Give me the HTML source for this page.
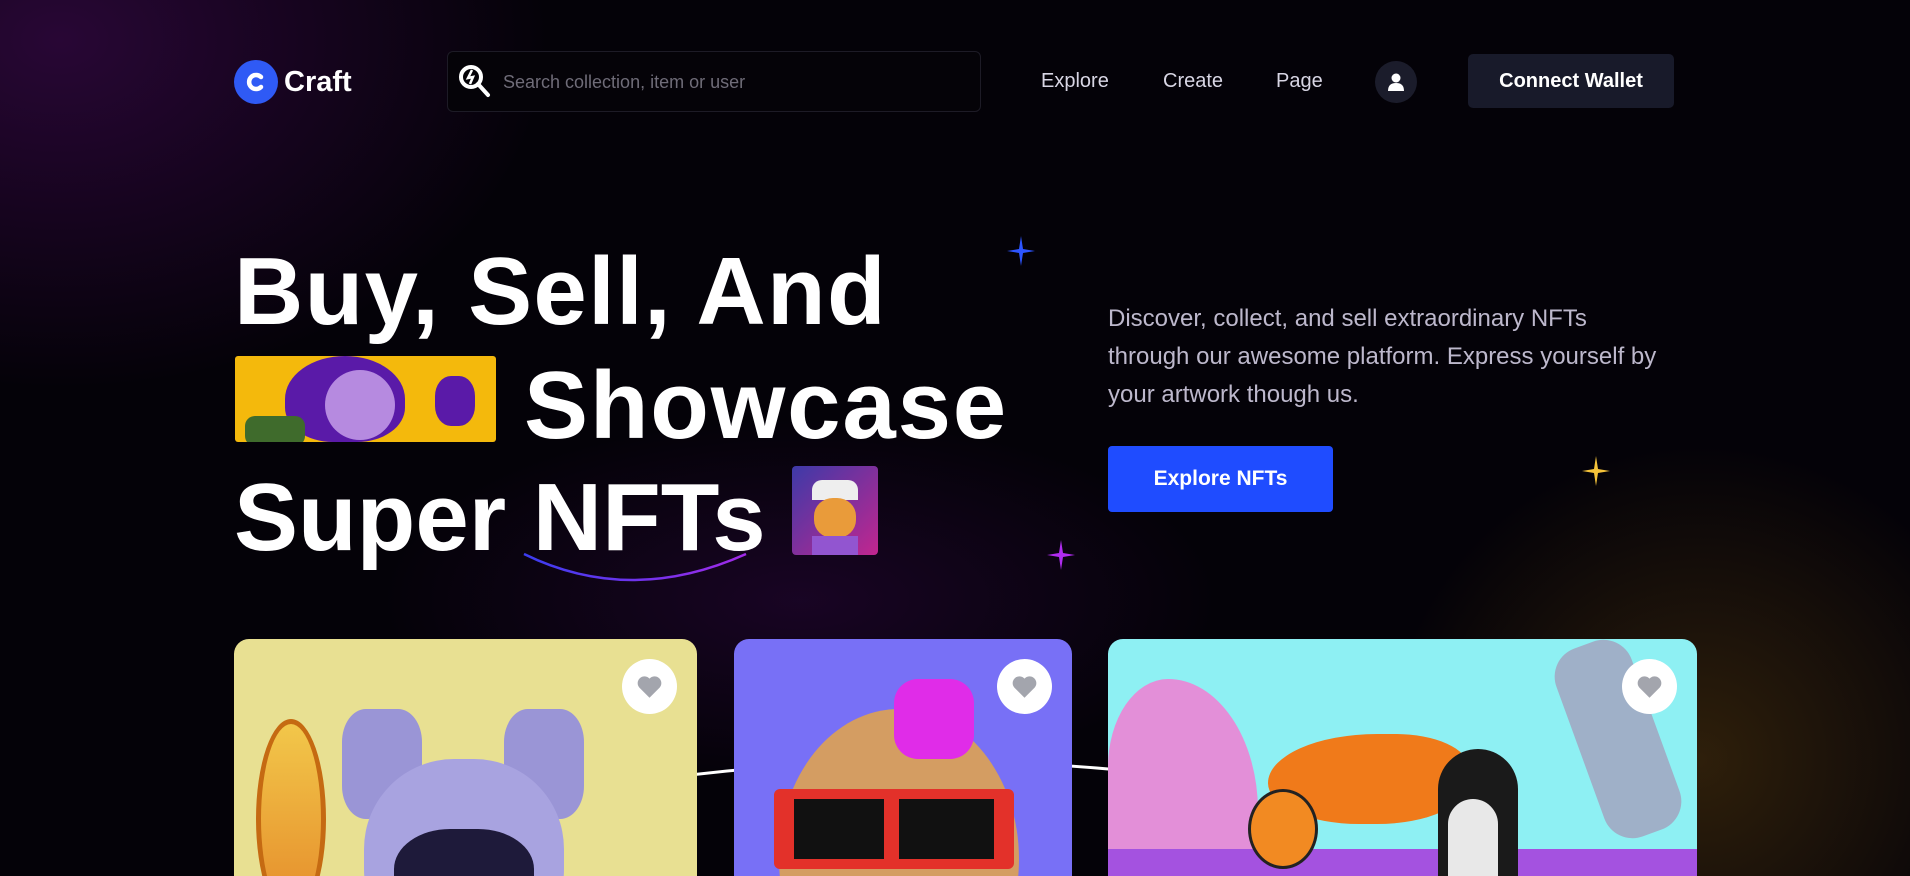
<!DOCTYPE html>
<html><head><meta charset="utf-8"><style>
*{margin:0;padding:0;box-sizing:border-box}
html,body{width:1910px;height:876px;overflow:hidden}
body{font-family:"Liberation Sans",sans-serif;
background:
radial-gradient(ellipse 420px 420px at 1700px 760px,rgba(110,75,15,.4),transparent 75%),
radial-gradient(ellipse 700px 500px at 60px 40px,rgba(70,10,90,.55),transparent 70%),
radial-gradient(ellipse 600px 260px at 800px 600px,rgba(50,8,70,.45),transparent 70%),
#040208;position:relative;color:#fff}
.a{position:absolute}
.nav{font-size:20px;color:#d8d6e4;top:70px}
.h{font-weight:bold;font-size:96px;letter-spacing:1.3px;line-height:1}
.card{position:absolute;top:639px;height:237px;border-radius:15px 15px 0 0;overflow:hidden}
.heart{position:absolute;top:659px;width:55px;height:55px;border-radius:50%;background:#fff}
.heart svg{position:absolute;left:14px;top:15px}
</style></head><body>
<div class="a" style="left:234px;top:60px;width:44px;height:44px;border-radius:50%;background:#2f5af5"></div>
<svg class="a" style="left:244px;top:70px" width="24" height="24" viewBox="0 0 24 24"><path d="M17 7 A7 7 0 1 0 17 17" stroke="#fff" stroke-width="4.5" fill="none" stroke-linecap="round"/></svg>
<div class="a" style="left:284px;top:66px;font-size:29px;font-weight:bold">Craft</div>
<div class="a" style="left:447px;top:51px;width:534px;height:61px;border:1px solid #1d1b26;border-radius:6px;background:#050308"></div>
<svg class="a" style="left:458px;top:64px" width="34" height="34" viewBox="0 0 34 34"><circle cx="13" cy="13" r="10" stroke="#fff" stroke-width="4" fill="none"/><path d="M20 20 L30 31" stroke="#fff" stroke-width="4" stroke-linecap="round"/><path d="M14 6 L10 14 L15 13 L12 20" stroke="#fff" stroke-width="2.5" fill="none"/></svg>
<div class="a" style="left:503px;top:72px;font-size:18px;color:#6f6c78">Search collection, item or user</div>
<div class="a nav" style="left:1041px">Explore</div>
<div class="a nav" style="left:1163px">Create</div>
<div class="a nav" style="left:1276px">Page</div>
<div class="a" style="left:1375px;top:61px;width:42px;height:42px;border-radius:50%;background:#1b1c2b"></div>
<svg class="a" style="left:1386px;top:72px" width="20" height="20" viewBox="0 0 20 20"><circle cx="10" cy="6" r="4.5" fill="#fff"/><path d="M2 19 Q2 11 10 11 Q18 11 18 19Z" fill="#fff"/></svg>
<div class="a" style="left:1468px;top:54px;width:206px;height:54px;border-radius:5px;background:#181a2a;font-size:20px;font-weight:bold;text-align:center;line-height:54px">Connect Wallet</div>

<div class="a h" style="left:234px;top:244px">Buy, Sell, And</div>
<div class="a" style="left:235px;top:356px;width:261px;height:86px;border-radius:3px;background:#f4b90c;overflow:hidden">
<div class="a" style="left:50px;top:0;width:120px;height:86px;border-radius:50% 50% 40% 40%;background:#5a1aa8"></div>
<div class="a" style="left:90px;top:14px;width:70px;height:70px;border-radius:50%;background:#b68ae0"></div>
<div class="a" style="left:10px;top:60px;width:60px;height:30px;background:#3f6b2c;border-radius:10px"></div>
<div class="a" style="left:200px;top:20px;width:40px;height:50px;background:#5a1aa8;border-radius:40%"></div>
</div>
<div class="a h" style="left:524px;top:358px;letter-spacing:1.8px">Showcase</div>
<div class="a h" style="left:234px;top:470px;letter-spacing:0">Super NFTs</div>
<div class="a" style="left:792px;top:466px;width:86px;height:89px;border-radius:4px;background:linear-gradient(135deg,#3d3aa8,#c2268f);overflow:hidden">
<div class="a" style="left:20px;top:14px;width:46px;height:20px;background:#eee;border-radius:10px 10px 0 0"></div>
<div class="a" style="left:22px;top:32px;width:42px;height:40px;background:#e99b3a;border-radius:45%"></div>
<div class="a" style="left:20px;top:70px;width:46px;height:20px;background:#9255d0"></div>
</div>
<svg class="a" style="left:520px;top:548px" width="235" height="36"><path d="M4 6 Q110 58 226 6" stroke="url(#g)" stroke-width="2.5" fill="none"/><defs><linearGradient id="g"><stop offset="0" stop-color="#3b3df0"/><stop offset="1" stop-color="#a22ae8"/></linearGradient></defs></svg>
<svg class="a" style="left:1007px;top:236px" width="28" height="30"><path d="M14 0 L16 13 L28 15 L16 17 L14 30 L12 17 L0 15 L12 13Z" fill="#2d55ff"/></svg>
<svg class="a" style="left:1047px;top:540px" width="28" height="30"><path d="M14 0 L16 13 L28 15 L16 17 L14 30 L12 17 L0 15 L12 13Z" fill="#b02cf0"/></svg>
<svg class="a" style="left:1582px;top:456px" width="28" height="30"><path d="M14 0 L16 13 L28 15 L16 17 L14 30 L12 17 L0 15 L12 13Z" fill="#f5c33a"/></svg>

<div class="a" style="left:1108px;top:300px;font-size:24px;line-height:38px;color:#bdb8cc;white-space:nowrap">Discover, collect, and sell extraordinary NFTs<br>through our awesome platform. Express yourself by<br>your artwork though us.</div>
<div class="a" style="left:1108px;top:446px;width:225px;height:66px;border-radius:4px;background:#1f4cff;font-size:21px;font-weight:bold;text-align:center;line-height:66px">Explore NFTs</div>

<svg class="a" style="left:690px;top:755px" width="430" height="40"><path d="M0 20 Q210 -5 430 15" stroke="#fff" stroke-width="3" fill="none"/></svg>

<div class="card" style="left:234px;width:463px;background:#e8e092">
<div class="a" style="left:22px;top:80px;width:70px;height:200px;border-radius:50%;border:5px solid #c56a12;background:linear-gradient(#f2c74a,#e58b2a)"></div>
<div class="a" style="left:108px;top:70px;width:80px;height:110px;background:#9a95d6;border-radius:30%"></div>
<div class="a" style="left:270px;top:70px;width:80px;height:110px;background:#9a95d6;border-radius:30%"></div>
<div class="a" style="left:130px;top:120px;width:200px;height:200px;background:#a8a3e0;border-radius:45%"></div>
<div class="a" style="left:160px;top:190px;width:140px;height:100px;background:#1e1a3a;border-radius:40%"></div>
</div>
<div class="card" style="left:734px;width:338px;background:#7870f6">
<div class="a" style="left:45px;top:70px;width:240px;height:300px;background:#d49d62;border-radius:50%"></div>
<div class="a" style="left:160px;top:40px;width:80px;height:80px;background:#e02ce8;border-radius:30%"></div>
<div class="a" style="left:40px;top:150px;width:240px;height:80px;background:#e3312a;border-radius:6px"></div>
<div class="a" style="left:60px;top:160px;width:90px;height:60px;background:#111"></div>
<div class="a" style="left:165px;top:160px;width:95px;height:60px;background:#111"></div>
</div>
<div class="card" style="left:1108px;width:589px;background:#8ef0f3">
<div class="a" style="left:0;top:40px;width:150px;height:220px;background:#e38fd8;border-radius:40% 60% 0 0"></div>
<div class="a" style="left:0;top:210px;width:589px;height:60px;background:#a452e0"></div>
<div class="a" style="left:470px;top:0;width:80px;height:200px;background:#9fb0c8;border-radius:30px;transform:rotate(-20deg)"></div>
<div class="a" style="left:160px;top:95px;width:200px;height:90px;background:#f07a1a;border-radius:60% 40% 50% 50%"></div>
<div class="a" style="left:330px;top:110px;width:80px;height:200px;background:#1a1a1a;border-radius:40px"></div>
<div class="a" style="left:340px;top:160px;width:50px;height:120px;background:#e8e8e8;border-radius:25px"></div>
<div class="a" style="left:140px;top:150px;width:70px;height:80px;background:#f28a22;border-radius:50%;border:3px solid #222"></div>
</div>
<div class="heart" style="left:622px"><svg width="27" height="25" viewBox="0 0 24 22"><path d="M12 21 L3 12 A5.5 5.5 0 0 1 12 4 A5.5 5.5 0 0 1 21 12Z" fill="#a3a5ad"/></svg></div>
<div class="heart" style="left:997px"><svg width="27" height="25" viewBox="0 0 24 22"><path d="M12 21 L3 12 A5.5 5.5 0 0 1 12 4 A5.5 5.5 0 0 1 21 12Z" fill="#a3a5ad"/></svg></div>
<div class="heart" style="left:1622px"><svg width="27" height="25" viewBox="0 0 24 22"><path d="M12 21 L3 12 A5.5 5.5 0 0 1 12 4 A5.5 5.5 0 0 1 21 12Z" fill="#a3a5ad"/></svg></div>
</body></html>
